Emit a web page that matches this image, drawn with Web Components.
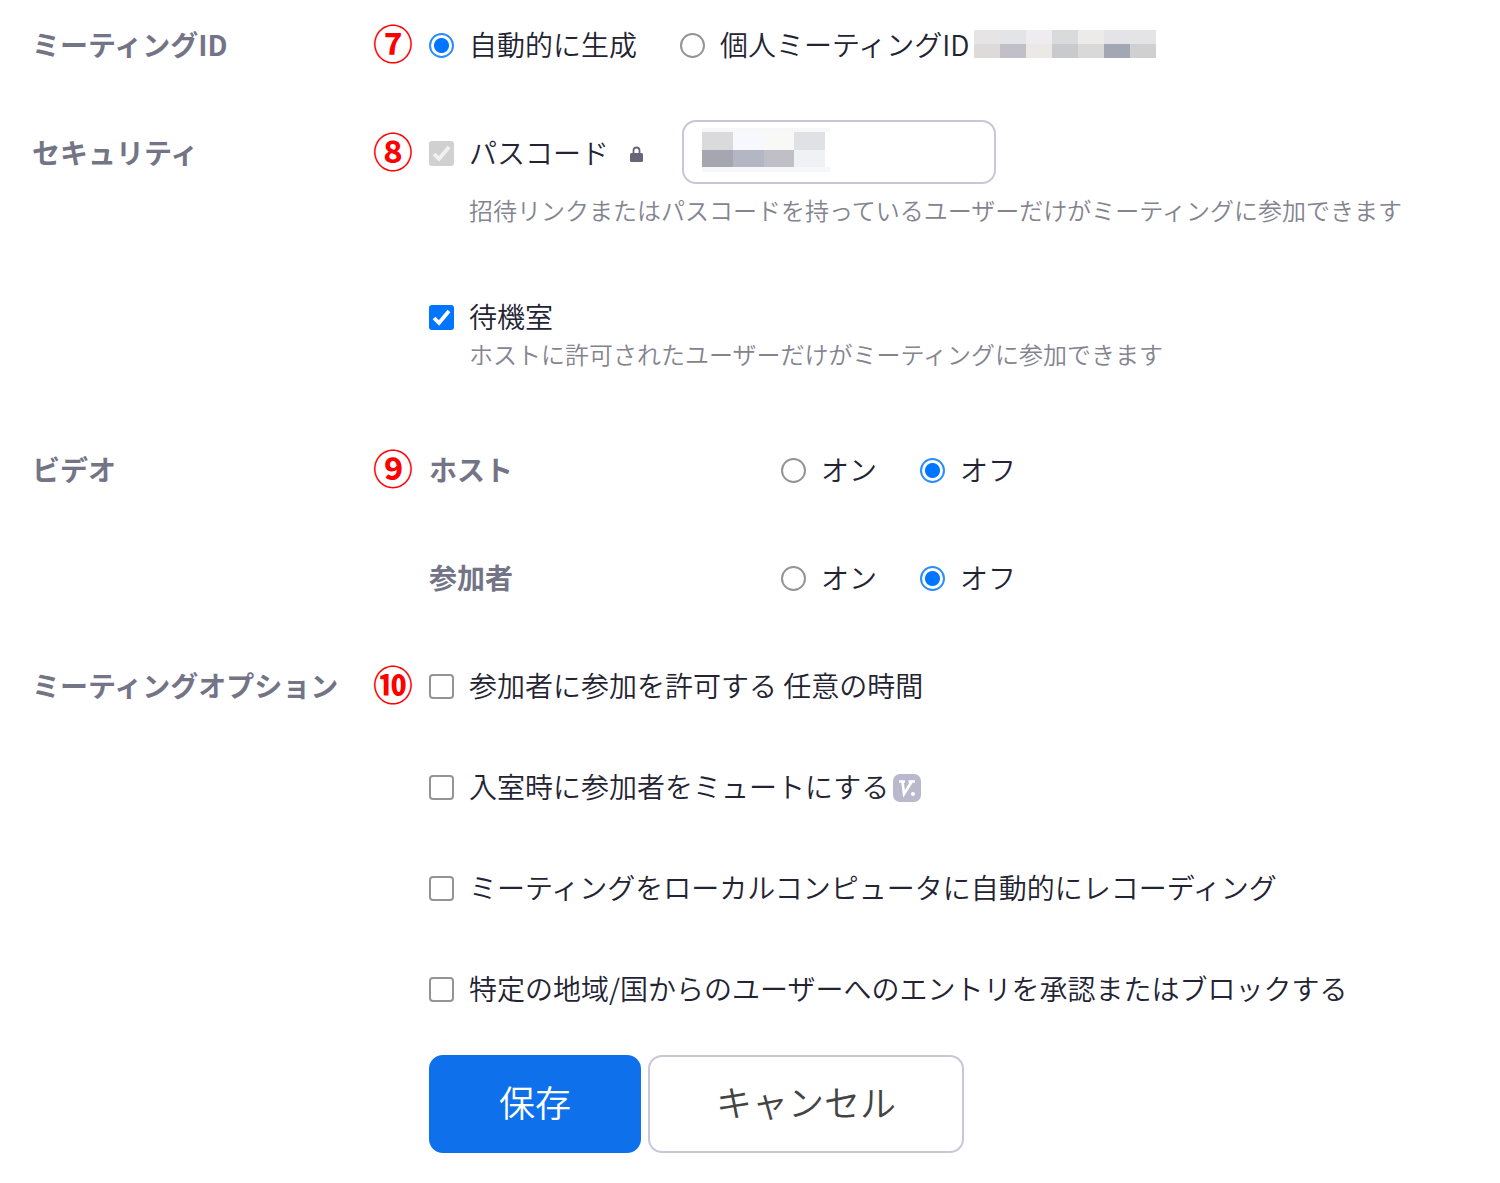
<!DOCTYPE html>
<html lang="ja">
<head>
<meta charset="UTF-8">
<meta name="viewport" content="width=device-width, initial-scale=1">
<title>ミーティング設定</title>
<style>
  body {
    margin: 0;
    background: #fff;
    color: #232333;
    font-family: "Noto Sans CJK JP", sans-serif;
    font-size: 28px;
    font-weight: 350;
    line-height: 40px;
  }
</style>
</head>
<body>
<meeting-form></meeting-form>

<script>
// Shared look of radios and checkboxes
const controlStyles = `
  label {
    display: flex;
    align-items: center;
    gap: 15px;
  }
  input[type="radio"], input[type="checkbox"] {
    appearance: none;
    box-sizing: border-box;
    flex: none;
    width: 25px;
    height: 25px;
    margin: 2px 0 0;
    border: 2px solid #949494;
    background: #fff center / 100% no-repeat;
  }
  input[type="radio"] {
    border-radius: 50%;
  }
  input[type="radio"]:checked {
    border-color: #2b8cff;
    background-image: radial-gradient(circle, #0075ff 7px, #fff 8px);
  }
  input[type="checkbox"] {
    border-radius: 4px;
  }
  input[type="checkbox"]:checked {
    border: 0;
    border-radius: 3px;
    background-color: #0075ff;
    background-image: url("data:image/svg+xml,%3Csvg xmlns='http://www.w3.org/2000/svg' viewBox='0 0 25 25'%3E%3Cpath d='M5 13l5 5L20 6' fill='none' stroke='white' stroke-width='3.8'/%3E%3C/svg%3E");
  }
  input[type="checkbox"]:disabled {
    background-color: #d0d0d0;
    background-image: url("data:image/svg+xml,%3Csvg xmlns='http://www.w3.org/2000/svg' viewBox='0 0 25 25'%3E%3Cpath d='M5 13l5 5L20 6' fill='none' stroke='%23f0f0f0' stroke-width='3.8'/%3E%3C/svg%3E");
  }
`;

// One settings row: title, step number, content
class FormRow extends HTMLElement {
  constructor() {
    super();
    this.attachShadow({ mode: 'open' });
  }

  connectedCallback() {
    const heading = this.getAttribute('heading');
    const step = this.getAttribute('step');

    this.shadowRoot.innerHTML = `
      <style>
        :host {
          display: grid;
          grid-template-columns: 341px 56px minmax(0, 1fr);
          align-items: start;
        }
        h2 {
          margin: 0;
          font-size: 28px;
          font-weight: 700;
          line-height: var(--first-line, 40px);
          color: #747487;
        }
        .step {
          margin-top: -2px;
          color: #f00;
          font-size: 40px;
          font-weight: 700;
          line-height: var(--first-line, 40px);
        }
      </style>
      <h2>${heading}</h2>
      <span class="step">${step}</span>
      <div><slot></slot></div>
    `;
  }
}

customElements.define('form-row', FormRow);

// Radios share one shadow root so that they stay in one group
class RadioGroup extends HTMLElement {
  constructor() {
    super();
    this.attachShadow({ mode: 'open' });
  }

  connectedCallback() {
    const options = this.getAttribute('options').split('|');
    const selected = Number(this.getAttribute('selected') || 0);
    const title = this.getAttribute('heading');

    this.shadowRoot.innerHTML = `
      <style>
        :host {
          display: flex;
          align-items: center;
        }
        ${controlStyles}
        .title {
          width: 352px;
          color: #747487;
          font-weight: 700;
        }
        .options {
          display: flex;
          gap: 43px;
        }
        ::slotted(*) {
          margin-left: 4px;
        }
      </style>
      ${title ? `<span class="title">${title}</span>` : ''}
      <div class="options" role="radiogroup">
        ${options.map((text, i) => `
          <label><input type="radio" name="choice" ${i === selected ? 'checked' : ''}>${text}</label>
        `).join('')}
      </div>
      <slot></slot>
    `;
  }
}

customElements.define('radio-group', RadioGroup);

// Checkbox with optional help text and extras behind the label
class CheckOption extends HTMLElement {
  constructor() {
    super();
    this.attachShadow({ mode: 'open' });
  }

  connectedCallback() {
    const help = this.getAttribute('help');
    const checked = this.hasAttribute('checked') ? 'checked' : '';
    const disabled = this.hasAttribute('disabled') ? 'disabled' : '';

    this.shadowRoot.innerHTML = `
      <style>
        :host {
          display: block;
        }
        ${controlStyles}
        .line {
          display: flex;
          align-items: center;
        }
        .help {
          margin: var(--help-gap, 2px) 0 0 40px;
          color: #84848f;
          font-size: 24px;
          line-height: 32px;
        }
      </style>
      <div class="line">
        <label><input type="checkbox" ${checked} ${disabled}>${this.getAttribute('text')}</label>
        <slot></slot>
      </div>
      ${help ? `<p class="help">${help}</p>` : ''}
    `;
  }
}

customElements.define('check-option', CheckOption);

// Blocks of colour that cover a private value
class MaskedValue extends HTMLElement {
  constructor() {
    super();
    this.attachShadow({ mode: 'open' });
  }

  connectedCallback() {
    const colors = this.getAttribute('colors').split(' ');

    this.shadowRoot.innerHTML = `
      <style>
        :host {
          display: grid;
          grid-template-columns: repeat(${colors.length / 2}, 1fr);
        }
      </style>
      ${colors.map((c) => `<i style="background:#${c}"></i>`).join('')}
    `;
  }
}

customElements.define('masked-value', MaskedValue);

class PasscodeField extends HTMLElement {
  constructor() {
    super();
    this.attachShadow({ mode: 'open' });
    this.shadowRoot.innerHTML = `
      <style>
        :host {
          display: flex;
          align-items: center;
          gap: 39px;
          margin-left: 21px;
        }
        svg {
          width: 13px;
          height: 16px;
          margin-top: 4px;
        }
        .box {
          position: relative;
        }
        input {
          box-sizing: border-box;
          display: block;
          width: 314px;
          height: 64px;
          padding: 0 18px;
          border: 2px solid #c8c7d8;
          border-radius: 14px;
          font: inherit;
          color: inherit;
        }
        .cover {
          position: absolute;
          left: 20px;
          top: 8px;
          width: 128px;
          height: 44px;
          box-sizing: border-box;
          padding: 4px 5px 5px 0;
          background: linear-gradient(#f7f7f9 4px, #fff 4px 39px, #f7f7f9 39px);
          pointer-events: none;
        }
        masked-value {
          height: 100%;
        }
      </style>
      <svg viewBox="0 0 13 16" aria-hidden="true">
        <path d="M3.5 8V4.5a3 3 0 0 1 6 0V8" fill="none" stroke="#666678" stroke-width="1.8"/>
        <rect y="7" width="13" height="9" rx="1.5" fill="#666678"/>
      </svg>
      <div class="box">
        <input type="text" aria-label="パスコード">
        <div class="cover">
          <masked-value colors="dadadc f6f8fd f8f8f7 e0e1e5 a6a6b0 b3b7c3 c0bec6 f0f1f4"></masked-value>
        </div>
      </div>
    `;
  }
}

customElements.define('passcode-field', PasscodeField);

class VersionBadge extends HTMLElement {
  constructor() {
    super();
    this.attachShadow({ mode: 'open' });
    this.shadowRoot.innerHTML = `
      <style>
        :host {
          display: block;
          width: 28px;
          height: 28px;
          margin: 4px 0 0 4px;
        }
        svg {
          display: block;
        }
      </style>
      <svg width="28" height="28" viewBox="0 0 28 28" aria-hidden="true">
        <rect width="28" height="28" rx="7" fill="#bab8cd"/>
        <path d="M6 7.5h6M9.5 8l1.5 12L18.5 8M15.500 7.500H22" fill="none" stroke="#fff" stroke-width="2.600"/>
        <circle cx="20" cy="20" r="2" fill="#fff"/>
      </svg>
    `;
  }
}

customElements.define('version-badge', VersionBadge);

class FormButton extends HTMLElement {
  constructor() {
    super();
    this.attachShadow({ mode: 'open' });
    this.shadowRoot.innerHTML = `
      <style>
        :host {
          display: block;
        }
        button {
          min-width: 212px;
          height: 98px;
          padding: 0 66px 6px;
          border: 2px solid #c8c7d8;
          border-radius: 14px;
          background: #fff;
          color: #444;
          font: inherit;
          font-size: 36px;
          cursor: pointer;
        }
        :host([primary]) button {
          border-color: #0e71eb;
          background: #0e71eb;
          color: #fff;
        }
      </style>
      <button type="button"><slot></slot></button>
    `;
  }
}

customElements.define('form-button', FormButton);

class MeetingForm extends HTMLElement {
  constructor() {
    super();
    this.attachShadow({ mode: 'open' });
    this.shadowRoot.innerHTML = `
      <style>
        :host {
          display: block;
          padding: 24px 32px 30px;
        }
        .security {
          --first-line: 64px;
          margin-top: 56px;
        }
        .passcode {
          --help-gap: 10px;
          margin-bottom: 70px;
        }
        .id-mask {
          width: 182px;
          height: 28px;
        }
        .video {
          margin-top: 79px;
        }
        .options {
          margin-top: 68px;
        }
        .stack {
          display: grid;
          gap: 61px;
        }
        .video .stack {
          gap: 68px;
        }
        .actions {
          display: flex;
          gap: 7px;
          margin: 47px 0 0 397px;
        }
      </style>
      <form-row heading="ミーティングID" step="⑦">
        <radio-group options="自動的に生成|個人ミーティングID" selected="0">
          <masked-value class="id-mask" colors="e6e4e4 e2e4e8 eeecee d9dada ecebe9 e4e4e8 e4e3e5 dedada c1c0c8 ece8e5 c9cacd d9d9d9 a3a6b3 d0d0d0"></masked-value>
        </radio-group>
      </form-row>

      <form-row class="security" heading="セキュリティ" step="⑧">
        <check-option class="passcode" text="パスコード" checked disabled
          help="招待リンクまたはパスコードを持っているユーザーだけがミーティングに参加できます">
          <passcode-field></passcode-field>
        </check-option>
        <check-option text="待機室" checked help="ホストに許可されたユーザーだけがミーティングに参加できます"></check-option>
      </form-row>

      <form-row class="video" heading="ビデオ" step="⑨">
        <div class="stack">
          <radio-group heading="ホスト" options="オン|オフ" selected="1"></radio-group>
          <radio-group heading="参加者" options="オン|オフ" selected="1"></radio-group>
        </div>
      </form-row>

      <form-row class="options" heading="ミーティングオプション" step="⑩">
        <div class="stack">
          <check-option text="参加者に参加を許可する 任意の時間"></check-option>
          <check-option text="入室時に参加者をミュートにする"><version-badge></version-badge></check-option>
          <check-option text="ミーティングをローカルコンピュータに自動的にレコーディング"></check-option>
          <check-option text="特定の地域/国からのユーザーへのエントリを承認またはブロックする"></check-option>
        </div>
      </form-row>

      <div class="actions">
        <form-button primary>保存</form-button>
        <form-button>キャンセル</form-button>
      </div>
    `;
  }
}

customElements.define('meeting-form', MeetingForm);
</script>
</body>
</html>
